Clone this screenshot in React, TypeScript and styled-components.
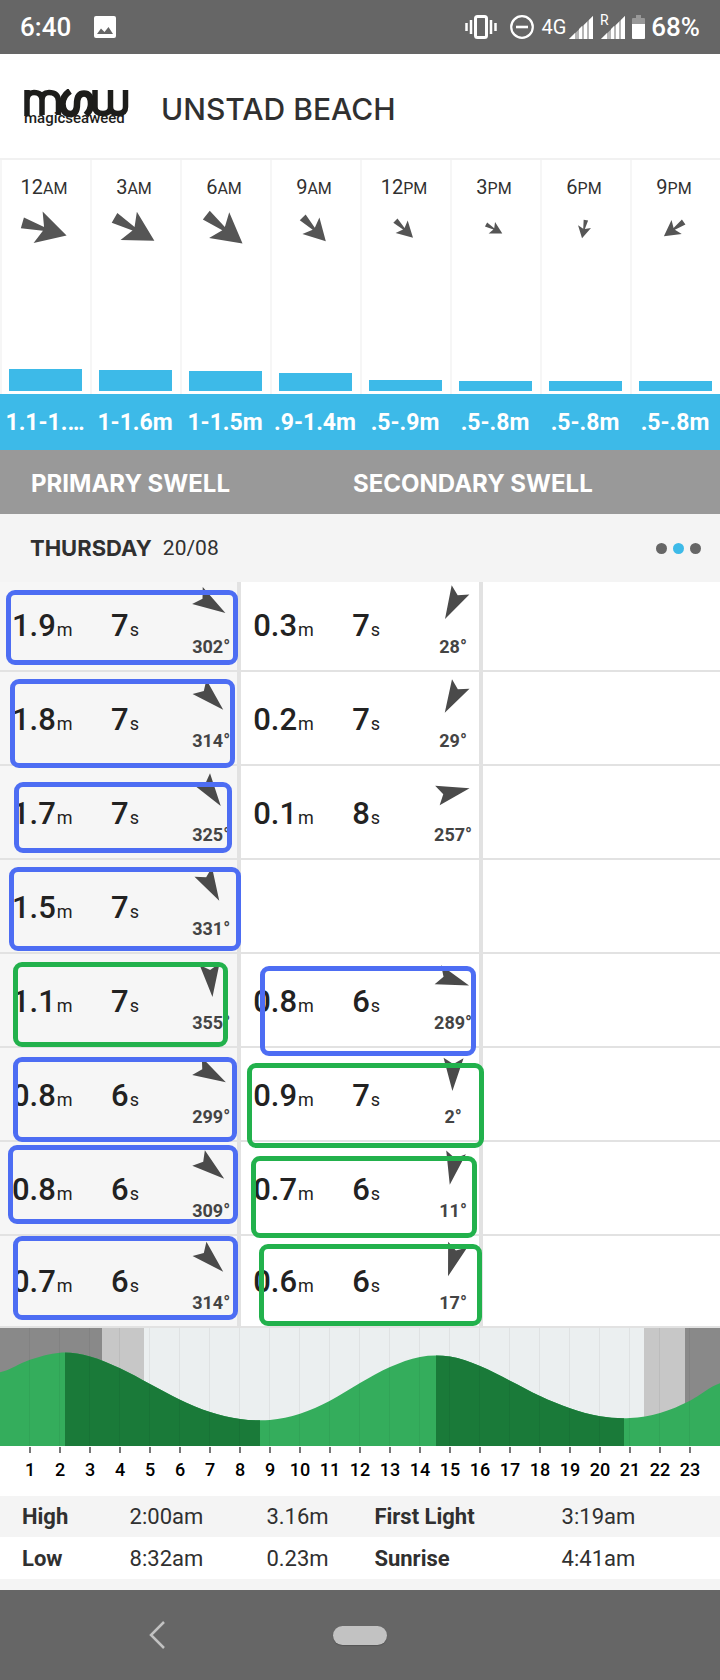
import React from 'react';
import styled, { createGlobalStyle } from 'styled-components';

const GlobalStyle = createGlobalStyle`
  *, *::before, *::after { box-sizing: border-box; }
  body {
    margin: 0;
    background: #fff;
    color: #303030;
    font-family: Roboto, "Liberation Sans", sans-serif;
  }
  button { border: 0; padding: 0; background: none; font: inherit; color: inherit; cursor: pointer; }
`;

const BLUE = '#3dbae8';
const LINE = '#e2e2e2';
const DISPLAY = 'Inter, "Liberation Sans", sans-serif';

/* ---------- status bar ---------- */

const StatusBar = styled.header`
  display: flex;
  align-items: center;
  height: 54px;
  padding: 0 20px;
  background: #666;
  color: #fff;
`;
const StatusText = styled.span`
  font-size: 26px;
  font-weight: 500;
  line-height: 30px;
`;
const StatusGroup = styled.div`
  display: flex;
  align-items: center;
  margin-left: auto;
  ${StatusText} { margin-left: 6px; }
`;
const Network = styled.span`
  margin-left: 7px;
  font-size: 20px;
  line-height: 24px;
`;
const Icon = styled.svg<{ $left?: number }>`
  display: block;
  flex: none;
  margin-left: ${(p) => p.$left ?? 0}px;
`;

const SignalBars = () => (
  <g>
    <path d="M0 23 24 0V23Z" fill="#b5b5b5" />
    <path d="M0 23 6 17V23ZM10 23V13L13 10V23ZM15 23V9L18 6V23ZM20 23V4L24 0V23Z" fill="#fff" />
  </g>
);

/* ---------- header ---------- */

const Header = styled.div`
  display: flex;
  align-items: center;
  height: 106px;
  padding: 6px 24px 0;
  border-bottom: 2px solid #f1f1f1;
`;
const Title = styled.h1`
  margin: 0 0 0 29px;
  font-family: ${DISPLAY};
  font-size: 30px;
  font-weight: 500;
  line-height: 36px;
`;

/* ---------- hourly surf chart ---------- */

const Hours = styled.section`
  display: grid;
  grid-template-columns: repeat(8, 1fr);
`;
const HourColumn = styled.div`
  display: flex;
  flex-direction: column;
  height: 234px;
  padding: 14px 0 3px;
  border-left: 2px solid #f6f6f6;
`;
const HourLabel = styled.div`
  padding-right: 4px;
  text-align: center;
  font-size: 20px;
  line-height: 26px;
  small { font-size: 16px; }
`;
const WindArrow = styled.svg`
  display: block;
  align-self: center;
  margin: 3px 5px 0 0;
`;
const SurfBar = styled.div`
  margin: auto 8px 0 7px;
  background: ${BLUE};
`;
const SurfHeights = styled.div`
  display: grid;
  grid-template-columns: repeat(8, 1fr);
  height: 56px;
  padding-top: 2px;
  align-items: center;
  background: ${BLUE};
  color: #fff;
  font-size: 23px;
  font-weight: 700;
  line-height: 28px;
  text-align: center;
  white-space: nowrap;
`;

type Hour = { n: string; half: string; angle: number; size: number; bar: number; surf: string };
const HOURS: Hour[] = [
  { n: '12', half: 'AM', angle: 16, size: 47, bar: 22, surf: '1.1-1.…' },
  { n: '3', half: 'AM', angle: 30, size: 47, bar: 21, surf: '1-1.6m' },
  { n: '6', half: 'AM', angle: 38, size: 47, bar: 20, surf: '1-1.5m' },
  { n: '9', half: 'AM', angle: 46, size: 34, bar: 18, surf: '.9-1.4m' },
  { n: '12', half: 'PM', angle: 44, size: 25, bar: 11, surf: '.5-.9m' },
  { n: '3', half: 'PM', angle: 29, size: 19, bar: 10, surf: '.5-.8m' },
  { n: '6', half: 'PM', angle: 102, size: 19, bar: 10, surf: '.5-.8m' },
  { n: '9', half: 'PM', angle: 144, size: 25, bar: 10, surf: '.5-.8m' },
];

/* ---------- swell headings ---------- */

const SwellHeadings = styled.div`
  display: grid;
  grid-template-columns: 322px 1fr;
  align-items: center;
  height: 64px;
  padding: 3px 31px 0;
  background: #999;
  color: #fff;
`;
const Heading = styled.h2`
  margin: 0;
  font-family: ${DISPLAY};
  font-size: 24px;
  font-weight: 700;
  line-height: 28px;
`;
const DayBar = styled.div`
  display: flex;
  align-items: center;
  gap: 11px;
  height: 68px;
  padding: 0 19px 0 30px;
  background: #f4f4f4;
`;
const Day = styled(Heading)`
  font-size: 22px;
`;
const DayDate = styled.span`
  font-size: 21px;
  line-height: 28px;
`;
const Pager = styled.div`
  display: flex;
  gap: 6px;
  margin-left: auto;
`;
const PagerDot = styled.button<{ $active?: boolean }>`
  width: 11px;
  height: 11px;
  border-radius: 50%;
  background: ${(p) => (p.$active ? BLUE : '#666')};
`;

/* ---------- swell table ---------- */

const SwellTable = styled.table`
  width: 100%;
  table-layout: fixed;
  border-collapse: separate;
  border-spacing: 0;
`;
const SwellRow = styled.tr`
  height: 94px;
  &:first-child { height: 90px; }
  &:last-child { height: 92px; }
`;
const SwellCell = styled.td`
  position: relative;
  padding: 0 0 13px 12px;
  vertical-align: bottom;
  border-right: 4px solid ${LINE};
  border-bottom: 2px solid ${LINE};
  &:first-child { background: #f6f6f6; }
  &:last-child { border-right: 0; }
`;
const Reading = styled.div`
  display: grid;
  grid-template-columns: 99px 1fr 52px;
  align-items: end;
`;
const Measure = styled.div`
  display: flex;
  align-items: baseline;
  gap: 1px;
  padding-bottom: 13px;
  font-size: 31px;
  font-weight: 500;
  line-height: 36px;
  color: #222;
  small { font-size: 18px; font-weight: 400; line-height: 20px; }
`;
const Direction = styled.div`
  display: flex;
  flex-direction: column;
  align-items: center;
  gap: 17px;
  font-size: 18px;
  font-weight: 700;
  line-height: 20px;
  color: #444;
`;
const Marker = styled.span<{ $x: number; $y: number; $w: number; $h: number; $good?: boolean }>`
  position: absolute;
  z-index: 1;
  left: ${(p) => p.$x}px;
  top: ${(p) => p.$y}px;
  width: ${(p) => p.$w}px;
  height: ${(p) => p.$h}px;
  border: 5px solid ${(p) => (p.$good ? '#22b14c' : '#4d6df3')};
  border-radius: 9px;
  pointer-events: none;
`;

type Box = { x: number; y: number; w: number; h: number; good?: boolean };
type Swell = { height: string; period: string; deg: number; box?: Box };
const SWELLS: [Swell, Swell | null][] = [
  [
    { height: '1.9', period: '7', deg: 302, box: { x: 6, y: 8, w: 232, h: 75 } },
    { height: '0.3', period: '7', deg: 28 },
  ],
  [
    { height: '1.8', period: '7', deg: 314, box: { x: 10, y: 7, w: 225, h: 89 } },
    { height: '0.2', period: '7', deg: 29 },
  ],
  [
    { height: '1.7', period: '7', deg: 325, box: { x: 14, y: 16, w: 218, h: 71 } },
    { height: '0.1', period: '8', deg: 257 },
  ],
  [{ height: '1.5', period: '7', deg: 331, box: { x: 9, y: 7, w: 232, h: 84 } }, null],
  [
    { height: '1.1', period: '7', deg: 355, box: { x: 13, y: 8, w: 215, h: 85, good: true } },
    { height: '0.8', period: '6', deg: 289, box: { x: 19, y: 12, w: 216, h: 90 } },
  ],
  [
    { height: '0.8', period: '6', deg: 299, box: { x: 13, y: 9, w: 224, h: 85 } },
    { height: '0.9', period: '7', deg: 2, box: { x: 6, y: 15, w: 237, h: 85, good: true } },
  ],
  [
    { height: '0.8', period: '6', deg: 309, box: { x: 8, y: 3, w: 230, h: 79 } },
    { height: '0.7', period: '6', deg: 11, box: { x: 10, y: 14, w: 226, h: 82, good: true } },
  ],
  [
    { height: '0.7', period: '6', deg: 314, box: { x: 13, y: 0, w: 225, h: 84 } },
    { height: '0.6', period: '6', deg: 17, box: { x: 18, y: 8, w: 223, h: 82, good: true } },
  ],
];

const SwellReading = ({ swell }: { swell: Swell }) => (
  <>
    <Reading>
      <Measure>{swell.height}<small>m</small></Measure>
      <Measure>{swell.period}<small>s</small></Measure>
      <Direction>
        <Icon width="32" height="32" viewBox="-16 -16 32 32" overflow="visible" aria-hidden="true">
          <path d="M0 17-10-16 0-10 10-16Z" fill="#4a4a4a" transform={`rotate(${swell.deg})`} />
        </Icon>
        <span>{swell.deg}°</span>
      </Direction>
    </Reading>
    {swell.box && (
      <Marker $x={swell.box.x} $y={swell.box.y} $w={swell.box.w} $h={swell.box.h} $good={swell.box.good} />
    )}
  </>
);

/* ---------- tide ---------- */

const TideGraph = styled.svg`
  display: block;
  width: 100%;
  height: 118px;
`;
const TideAxis = styled.div`
  display: grid;
  grid-template-columns: repeat(23, 1fr);
  height: 50px;
  padding: 1px calc(100% / 48) 0;
  background: #fff;
`;
const TideHour = styled.span`
  display: flex;
  flex-direction: column;
  align-items: center;
  gap: 6px;
  color: #000;
  font-size: 18px;
  font-weight: 500;
  line-height: 22px;
  &::before {
    content: '';
    width: 2px;
    height: 6px;
    background: #777;
  }
`;
const TideTable = styled.table`
  width: 100%;
  table-layout: fixed;
  border-collapse: separate;
  border-spacing: 0;
  border-bottom: 11px solid #f4f4f4;
  font-size: 22px;
  line-height: 26px;
  tr { height: 41px; }
  tr:last-child { height: 42px; }
  tr:first-child { background: #f4f4f4; }
`;
const TideLabel = styled.th<{ $inset?: number }>`
  padding: 1px 0 0 ${(p) => p.$inset ?? 0}px;
  text-align: left;
  font-weight: 700;
`;
const TideValue = styled.td`
  padding: 1px 0 0;
`;

/* Water height at every hour, from midnight to midnight. */
const TIDE = [
  44.3, 31.8, 24.7, 28.4, 40.3, 56, 71.7, 84, 90.9, 91.9, 85.7, 72.7, 55,
  39, 28.9, 28.6, 38, 52.7, 68, 80.3, 88.3, 90.1, 85, 72.7, 55.3,
];

function smoothPath(levels: number[]) {
  const at = (i: number) => levels[Math.min(Math.max(i, 0), levels.length - 1)];
  let d = `M0 ${at(0)}`;
  for (let i = 0; i < levels.length - 1; i++) {
    const x = i * 30;
    const y1 = at(i) + (at(i + 1) - at(i - 1)) / 6;
    const y2 = at(i + 1) - (at(i + 2) - at(i)) / 6;
    d += `C${x + 10} ${y1} ${x + 20} ${y2} ${x + 30} ${at(i + 1)}`;
  }
  return `${d}V118H0Z`;
}

const HOUR_TICKS = Array.from({ length: 23 }, (_, i) => i + 1);
const TIDE_ROWS = [
  ['High', '2:00am', '3.16m', 'First Light', '3:19am'],
  ['Low', '8:32am', '0.23m', 'Sunrise', '4:41am'],
];

/* ---------- navigation bar ---------- */

const NavBar = styled.nav`
  display: grid;
  grid-template-columns: 1fr 54px 1fr;
  align-items: center;
  height: 90px;
  background: #666;
`;
const BackButton = styled.button`
  justify-self: center;
  margin-right: 20px;
`;
const HomeButton = styled.button`
  height: 19px;
  border-radius: 10px;
  background: #c2c2c2;
  box-shadow: 0 1px 1px #555;
`;

export default function App() {
  return (
    <>
      <GlobalStyle />
      <StatusBar>
        <StatusText>6:40</StatusText>
        <Icon $left={23} width="22" height="22" viewBox="0 0 22 22" role="img" aria-label="Image">
          <rect width="22" height="22" rx="2" fill="#fff" />
          <path d="M3 18 7 12.500 10.500 16 14.500 11 19 18Z" fill="#666" />
        </Icon>
        <StatusGroup>
          <Icon width="32" height="24" viewBox="0 0 32 24" fill="none" stroke="#fff" aria-label="Vibrate">
            <rect x="10.500" y="1.500" width="11" height="21" rx="2" strokeWidth="3" />
            <path d="M1.500 8V16M6 5V19M26 5V19M30.500 8V16" strokeWidth="2.500" />
          </Icon>
          <Icon $left={13} width="24" height="24" viewBox="0 0 24 24" fill="none" stroke="#fff" strokeWidth="2.200" aria-label="Do not disturb">
            <circle cx="12" cy="12" r="10.800" />
            <path d="M6 12H18" strokeWidth="2.600" />
          </Icon>
          <Network>4G</Network>
          <Icon $left={3} width="24" height="23" viewBox="0 0 24 23" aria-label="Signal"><SignalBars /></Icon>
          <Icon $left={7} width="26" height="34" viewBox="0 -4 26 34" aria-label="Roaming signal">
            <g transform="translate(1 2)"><SignalBars /></g>
            <text x="0" y="11" fontSize="14" fill="#fff">R</text>
          </Icon>
          <Icon $left={6} width="13" height="24" viewBox="0 0 13 24" aria-label="Battery">
            <path d="M4 0H9V3H12Q13 3 13 4V10H0V4Q0 3 1 3H4Z" fill="#989898" />
            <path d="M0 9H13V23Q13 24 12 24H1Q0 24 0 23Z" fill="#fff" />
          </Icon>
          <StatusText>68%</StatusText>
        </StatusGroup>
      </StatusBar>

      <Header>
        <Icon width="108" height="40" viewBox="0 0 108 40" role="img" aria-label="MSW magicseaweed">
          <g fill="none" stroke="#1d1d1b" strokeWidth="5.500">
            <path d="M3 27V1M3 11Q3 3.500 10 3.500Q18 3.500 18 11V26M18 11Q18 3.500 25 3.500Q34 3.500 34.500 12V26" />
            <path d="M46 2Q38.500 7 38.500 15Q39 25 46.500 25Q53 25 53 15Q53 4.500 60 4.500Q67 4.500 67 15Q67 21 62 26" strokeWidth="6.500" />
            <path d="M71 1V18Q71 24.500 79 24.500Q86.500 24.500 86.500 18V1M86.500 18Q86.500 24.500 94 24.500Q101.500 24.500 101.500 18V1" />
          </g>
          <text x="0" y="34" fontSize="15" fontWeight="500" fill="#1d1d1b">magicseaweed</text>
        </Icon>
        <Title>UNSTAD BEACH</Title>
      </Header>

      <main>
        <Hours aria-label="Surf by hour">
          {HOURS.map((h) => (
            <HourColumn key={h.n + h.half}>
              <HourLabel>{h.n}<small>{h.half}</small></HourLabel>
              <WindArrow width="48" height="48" viewBox="-24 -24 48 48" aria-hidden="true">
                <path
                  d="M23 0-6 16-0.500 2-22 5.500V-5.500L-0.500-2-6-16Z"
                  fill="#555"
                  transform={`rotate(${h.angle}) scale(${h.size / 46})`}
                />
              </WindArrow>
              <SurfBar style={{ height: h.bar }} />
            </HourColumn>
          ))}
        </Hours>
        <SurfHeights>
          {HOURS.map((h) => <span key={h.n + h.half}>{h.surf}</span>)}
        </SurfHeights>

        <SwellHeadings>
          <Heading>PRIMARY SWELL</Heading>
          <Heading>SECONDARY SWELL</Heading>
        </SwellHeadings>
        <DayBar>
          <Day>THURSDAY</Day>
          <DayDate>20/08</DayDate>
          <Pager>
            <PagerDot aria-label="Wind" />
            <PagerDot aria-label="Swell" $active />
            <PagerDot aria-label="Weather" />
          </Pager>
        </DayBar>

        <SwellTable aria-label="Swell readings">
          <colgroup>
            <col style={{ width: '33.5%' }} />
            <col style={{ width: '33.6%' }} />
            <col />
          </colgroup>
          <tbody>
            {SWELLS.map(([primary, secondary], i) => (
              <SwellRow key={i}>
                <SwellCell><SwellReading swell={primary} /></SwellCell>
                <SwellCell>{secondary && <SwellReading swell={secondary} />}</SwellCell>
                <SwellCell />
              </SwellRow>
            ))}
          </tbody>
        </SwellTable>

        <TideGraph viewBox="0 0 720 118" preserveAspectRatio="none" role="img" aria-label="Tide graph">
          <defs>
            <clipPath id="tide"><path d={smoothPath(TIDE)} /></clipPath>
          </defs>
          <rect width="720" height="118" fill="#ebeff0" />
          <rect width="144" height="118" fill="#c7c7c7" />
          <rect width="102" height="118" fill="#898989" />
          <rect x="644" width="76" height="118" fill="#c7c7c7" />
          <rect x="685" width="35" height="118" fill="#898989" />
          <g clipPath="url(#tide)">
            <rect width="720" height="118" fill="#34ad5c" />
            <rect x="65" width="195" height="118" fill="#1a7a39" />
            <rect x="436" width="188" height="118" fill="#1a7a39" />
          </g>
          {HOUR_TICKS.map((h) => (
            <rect key={h} x={h * 30 - 1} width="1" height="118" fill="#000" opacity="0.05" />
          ))}
        </TideGraph>
        <TideAxis>
          {HOUR_TICKS.map((h) => <TideHour key={h}>{h}</TideHour>)}
        </TideAxis>
        <TideTable>
          <colgroup>
            <col style={{ width: '18%' }} />
            <col style={{ width: '19%' }} />
            <col style={{ width: '15%' }} />
            <col style={{ width: '26%' }} />
            <col />
          </colgroup>
          <tbody>
            {TIDE_ROWS.map(([tide, time, level, sun, sunTime]) => (
              <tr key={tide}>
                <TideLabel scope="row" $inset={22}>{tide}</TideLabel>
                <TideValue>{time}</TideValue>
                <TideValue>{level}</TideValue>
                <TideLabel>{sun}</TideLabel>
                <TideValue>{sunTime}</TideValue>
              </tr>
            ))}
          </tbody>
        </TideTable>
      </main>

      <NavBar>
        <BackButton aria-label="Back">
          <Icon width="16" height="28" viewBox="0 0 16 28" fill="none" stroke="#c2c2c2" strokeWidth="2.500">
            <path d="M15 1 2 14 15 27" />
          </Icon>
        </BackButton>
        <HomeButton aria-label="Home" />
      </NavBar>
    </>
  );
}
